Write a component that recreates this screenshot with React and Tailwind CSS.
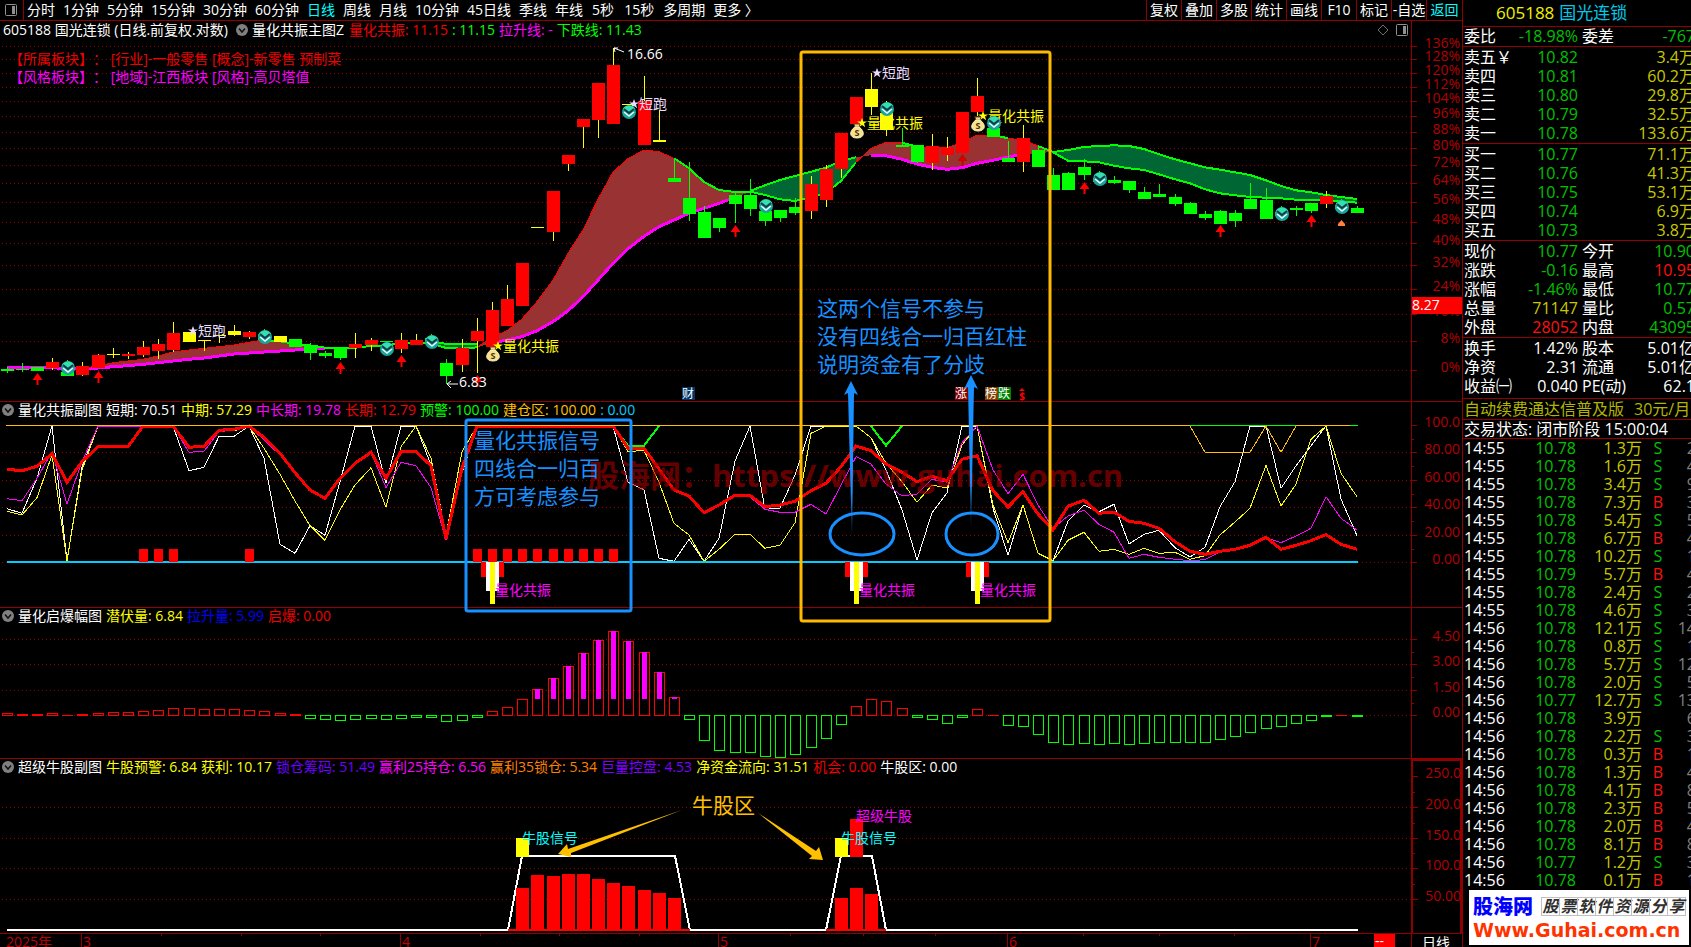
import { Fragment } from 'react';

const FONT = "font-['Open_Sans','Noto_Sans_CJK_SC',sans-serif]";

const PERIODS = ['分时', '1分钟', '5分钟', '15分钟', '30分钟', '60分钟', '日线', '周线', '月线', '10分钟', '45日线', '季线', '年线', '5秒', '15秒', '多周期', '更多 〉'];
const TOOLS = ['复权', '叠加', '多股', '统计', '画线', 'F10', '标记', '-自选'];

// bar i -> x, and sample (third of a pixel) -> y
const X   = i => Math.round(6.5 + 15.17 * i);
const T   = v => v / 3;
const SUB = v => 395 + v / 3;
const LOW = v => 610 + v / 3;

const COLORS = { r: '#ff0000', g: '#00ff00', y: '#ffff00' };

// colour, body top, body bottom, high, low
const CANDLES = [
  ['g', 369, 371, 367, 373], ['g', 369, 370, 363, 372], ['g', 367, 371, 367, 371], ['r', 362, 368, 358, 370], ['g', 372, 376, 360, 376],
  ['r', 366, 375, 362, 376], ['r', 355, 368, 354, 368], ['y', 354, 355, 348, 358], ['r', 354, 356, 352, 359], ['r', 347, 355, 341, 357],
  ['r', 344, 351, 339, 359], ['r', 333, 350, 322, 352], ['y', 332, 342, 332, 342], ['y', 340, 341, 340, 351], ['y', 335, 336, 335, 343],
  ['y', 331, 335, 325, 336], ['r', 332, 337, 331, 339], ['g', 334, 340, 329, 343], ['y', 336, 342, 336, 342], ['g', 339, 347, 339, 347],
  ['g', 345, 353, 343, 360], ['g', 353, 356, 351, 358], ['g', 347, 358, 347, 360], ['r', 344, 348, 333, 358], ['r', 340, 345, 338, 351],
  ['g', 341, 342, 341, 352], ['r', 340, 349, 333, 353], ['r', 340, 345, 334, 345], ['g', 338, 344, 334, 346], ['g', 363, 376, 359, 384],
  ['r', 348, 365, 339, 372], ['r', 331, 341, 318, 373], ['r', 310, 347, 302, 347], ['r', 299, 326, 285, 326], ['r', 263, 306, 263, 306],
  ['y', 227, 228, 227, 228], ['r', 191, 232, 191, 241], ['r', 155, 164, 155, 171], ['r', 119, 127, 119, 148], ['r', 83, 120, 83, 138],
  ['r', 65, 124, 48, 124], ['y', 104, 105, 104, 105], ['r', 101, 145, 76, 145], ['y', 140, 142, 110, 142], ['g', 178, 182, 160, 182],
  ['g', 198, 214, 162, 221], ['g', 212, 238, 206, 238], ['g', 218, 228, 218, 232], ['g', 195, 204, 192, 223], ['g', 195, 209, 179, 216],
  ['g', 211, 221, 200, 226], ['g', 210, 218, 210, 222], ['g', 207, 213, 198, 215], ['r', 184, 211, 176, 219], ['r', 169, 200, 165, 207],
  ['r', 133, 169, 133, 178], ['r', 97, 124, 97, 124], ['y', 89, 107, 73, 115], ['y', 113, 130, 101, 136], ['g', 145, 147, 128, 147],
  ['g', 145, 162, 145, 163], ['r', 146, 163, 134, 170], ['r', 148, 155, 137, 161], ['r', 112, 153, 112, 153], ['r', 96, 112, 78, 116],
  ['g', 128, 137, 117, 137], ['g', 158, 162, 141, 162], ['r', 138, 162, 125, 172], ['g', 150, 167, 146, 167], ['g', 175, 190, 168, 190],
  ['g', 173, 190, 172, 190], ['g', 167, 175, 159, 180], ['g', 178, 182, 171, 182], ['g', 180, 183, 176, 184], ['g', 181, 190, 181, 193],
  ['g', 192, 199, 187, 199], ['g', 194, 197, 184, 197], ['g', 197, 204, 194, 206], ['g', 203, 214, 202, 214], ['g', 214, 218, 211, 220],
  ['g', 211, 224, 210, 224], ['g', 213, 221, 210, 227], ['g', 199, 209, 183, 209], ['g', 200, 219, 188, 219], ['g', 212, 216, 206, 218],
  ['g', 208, 210, 206, 216], ['g', 203, 211, 203, 213], ['r', 196, 204, 191, 208], ['g', 205, 209, 199, 212], ['g', 208, 213, 206, 213],
];

const BANDS = [
  { start: 5, fill: '#993333',
    top: [1105, 1098, 1088, 1083, 1078, 1068, 1056, 1050, 1045, 1040, 1035, 1027, 1020, 1023, 1032, 1040, 1045],
    low: [1107, 1104, 1100, 1097, 1093, 1088, 1083, 1078, 1074, 1068, 1062, 1059, 1056, 1053, 1050, 1047, 1044] },
  { start: 28, fill: '#006633', top: [1026, 1031, 1033, 1031], low: [1030, 1044, 1046, 1042] },
  { start: 31, fill: '#993333',
    top: [1042, 1012, 992, 957, 905, 840, 760, 690, 598, 516, 476, 450, 455, 475, 505, 546, 570, 576, 575],
    low: [1042, 1029, 1020, 1010, 992, 965, 932, 890, 840, 790, 746, 709, 680, 660, 640, 625, 610, 592, 577] },
  { start: 49, fill: '#006633',
    top: [573, 556, 540, 528, 515, 503, 483, 472],
    low: [575, 585, 598, 603, 592, 578, 543, 487] },
  { start: 56, fill: '#993333',
    top: [487, 445, 427, 428, 440, 443, 443, 428, 405, 405, 415, 420, 438, 456],
    low: [472, 466, 467, 478, 492, 502, 508, 503, 490, 481, 471, 463, 459, 456] },
  { start: 69, fill: '#006633',
    top: [456, 450, 441, 438, 436, 438, 447, 463, 478, 490, 502, 509, 517, 525, 541, 558, 571, 577, 585, 591, 597],
    low: [457, 482, 484, 487, 497, 505, 510, 523, 538, 550, 568, 580, 586, 591, 593, 595, 599, 600, 600, 604, 608] },
];

const TRENDS = [
  { start: 0, color: '#ff00ff', w: 3, v: [1103, 1103, 1103, 1103, 1106, ...BANDS[0].low] },
  { start: 32, color: '#ff00ff', w: 3, v: BANDS[2].low.slice(1, 18) },
  { start: 57, color: '#ff00ff', w: 3, v: BANDS[4].low.slice(1, 12) },
  { start: 5, color: '#ff0000', w: 1, v: BANDS[0].top.slice(0, 13) },
  { start: 31, color: '#ff0000', w: 1, v: BANDS[2].top.slice(0, 14) },
  { start: 56, color: '#ff0000', w: 1, v: BANDS[4].top },
  { start: 17, color: '#00ff00', w: 2, v: [1020, 1024, 1032, 1036, 1043, 1043, 1043, 1038, 1036, 1030, 1030, 1026, 1031, 1033, 1031] },
  { start: 28, color: '#00ff00', w: 2, v: [1030, 1044, 1046, 1042] },
  { start: 44, color: '#00ff00', w: 2, v: BANDS[2].top.slice(13) },
  { start: 49, color: '#00ff00', w: 2, v: BANDS[3].top },
  { start: 49, color: '#00ff00', w: 2, v: BANDS[3].low },
  { start: 59, color: '#00ff00', w: 2, v: [428, 440] },
  { start: 65, color: '#00ff00', w: 2, v: [405, 415] },
  { start: 68, color: '#00ff00', w: 2, v: [438, 456] },
  { start: 69, color: '#00ff00', w: 2, v: BANDS[5].top },
  { start: 69, color: '#00ff00', w: 2, v: BANDS[5].low },
];

const SHORT = [341, 355, 250, 93, 497, 215, 93, 93, 93, 93, 93, 93, 227, 217, 124, 124, 93, 190, 448, 475, 392, 421, 260, 93, 93, 265, 93, 93, 210, 430,
  235, 93, 93, 93, 93, 93, 93, 93, 93, 93, 93, 262, 284, 490, 499, 433, 499, 430, 198, 93, 343, 340, 240, 93, 93, 93, 93, 128, 225, 345,
  495, 353, 293, 93, 93, 340, 481, 330, 475, 497, 378, 331, 350, 328, 447, 418, 406, 458, 486, 457, 335, 260, 93, 93, 280, 212, 153, 93, 312, 422];
const MID = [349, 360, 308, 180, 497, 225, 93, 93, 93, 93, 93, 93, 157, 155, 105, 108, 93, 160, 238, 318, 392, 436, 345, 270, 218, 337, 155, 93, 190, 420,
  170, 93, 93, 93, 93, 93, 93, 93, 93, 93, 93, 170, 166, 262, 385, 420, 499, 463, 418, 418, 460, 451, 383, 115, 93, 93, 93, 128, 205, 260,
  322, 270, 279, 150, 93, 330, 443, 330, 475, 497, 436, 412, 469, 463, 478, 460, 475, 472, 493, 482, 420, 381, 340, 211, 333, 268, 133, 93, 235, 305];
const MIDLONG = [311, 317, 250, 170, 327, 200, 93, 93, 93, 93, 93, 93, 172, 169, 110, 105, 93, 135, 180, 230, 285, 310, 250, 205, 172, 278, 202, 212, 278, 435,
  210, 93, 93, 93, 93, 93, 93, 93, 93, 93, 93, 160, 160, 220, 285, 303, 353, 330, 301, 306, 343, 352, 352, 328, 357, 270, 185, 207, 267, 303,
  297, 253, 262, 143, 93, 225, 296, 238, 330, 400, 363, 346, 388, 412, 490, 478, 487, 493, 497, 494, 470, 462, 450, 428, 443, 423, 400, 305, 370, 405];
const LONG = [223, 227, 214, 176, 262, 200, 155, 155, 155, 93, 93, 93, 157, 154, 106, 103, 93, 127, 175, 233, 285, 310, 250, 205, 172, 250, 170, 170, 212, 432,
  220, 93, 93, 93, 93, 93, 93, 93, 93, 93, 93, 160, 160, 222, 285, 303, 353, 330, 301, 301, 335, 330, 319, 287, 265, 215, 153, 167, 207, 232,
  260, 244, 257, 193, 182, 287, 336, 290, 357, 405, 334, 316, 355, 351, 379, 385, 400, 440, 469, 478, 469, 463, 451, 427, 463, 451, 437, 419, 448, 463];

const VOLUME = [309, 312, 312, 309, 316, 312, 309, 306, 306, 303, 300, 294, 294, 297, 297, 297, 300, 303, 309, 312, 323, 326, 329, 326, 323, 326, 323, 320, 320, 332,
  329, 320, 303, 291, 267, 237, 205, 168, 129, 90, 63, 93, 126, 186, 261, 326, 389, 419, 425, 425, 437, 440, 431, 410, 383, 341, 289, 268, 273, 294,
  320, 328, 338, 320, 298, 315, 344, 347, 371, 395, 401, 398, 401, 398, 401, 398, 395, 395, 395, 395, 386, 377, 365, 353, 347, 338, 329, 317, 315, 317];

const BALLS  = [[4, 368], [17, 337], [25, 349], [28, 342], [41, 112], [50, 206], [58, 109], [65, 123], [72, 179], [84, 214], [88, 207]];
const ARROWS = [[2, 373], [6, 371], [22, 362], [26, 355], [31, 375], [48, 225], [63, 154], [71, 182], [80, 225], [86, 215]];

const GRID_MAIN = [46, 59, 73, 87, 101, 116, 132, 148, 165, 183, 202, 222, 243, 265, 289, 314, 341, 370];

const path = (start, values, map) => values.map((v, k) => `${X(start + k)},${map(v).toFixed(1)}`).join(' ');

function Plot({ top, height, grid, children }) {
  return (
    <svg className="block w-full" height={height} viewBox={`0 ${top} 1411 ${height}`} preserveAspectRatio="xMinYMin slice" fontSize="14">
      {grid.map(y => <line key={y} x1="2" x2="1411" y1={y + 0.5} y2={y + 0.5} stroke="#900000" strokeDasharray="1 3" />)}
      {children}
    </svg>
  );
}

function Axis({ top, height, labels, minor = [], children }) {
  return (
    <svg className="block" width="50" height={height} viewBox={`0 ${top} 50 ${height}`} fontSize="14" fill="#b40000">
      {labels.map(([y, text]) => (
        <Fragment key={y}>
          <line x1="0" x2="5" y1={y + 0.5} y2={y + 0.5} stroke="#900000" />
          <text x="48" y={y + 2} textAnchor="end">{text}</text>
        </Fragment>
      ))}
      {minor.map(y => <line key={y} x1="0" x2="2" y1={y + 0.5} y2={y + 0.5} stroke="#900000" />)}
      {children}
    </svg>
  );
}

function Toggle() {
  return (
    <button type="button" aria-label="收起" className="mx-[2px] shrink-0">
      <svg width="12" height="12" viewBox="0 0 12 12">
        <circle cx="6" cy="6" r="6" fill="#808080" />
        <path d="M3 4.500L6 8L9 4.500" fill="none" stroke="#101010" strokeWidth="1.500" />
      </svg>
    </button>
  );
}

function Legend({ title, items }) {
  return (
    <header className="flex h-[17px] items-center whitespace-nowrap pb-[2px] text-[14px] leading-[15px] text-white">
      <Toggle />
      <h2 className="ml-[2px]">{title}</h2>
      {items.map(([text, color]) => <span key={text} className={`ml-[4px] ${color}`}>{text}</span>)}
    </header>
  );
}

function Panel({ title, items, top, height, grid, labels, minor, boxed, children }) {
  return (
    <section className="flex border-b border-[#900000]">
      <div className="min-w-0 flex-1">
        <Legend title={title} items={items} />
        <Plot top={top + 17} height={height - 17} grid={grid}>{children}</Plot>
      </div>
      <div className={boxed ? 'w-[51px] shrink-0 border-2 border-b-0 border-[#900000]' : 'w-[51px] shrink-0 border-l border-[#900000]'}>
        <Axis top={boxed ? top + 2 : top} height={boxed ? height - 2 : height} labels={labels} minor={minor} />
      </div>
    </section>
  );
}

function Ball({ x, y }) {
  return (
    <g transform={`translate(${x} ${y})`}>
      <circle r="7" fill="#1aa59c" />
      <path d="M-6 -3A7 7 0 0 1 6 -3L0 2Z" fill="#35e0b0" />
      <path d="M-5 -3L0 1L5 -3" fill="none" stroke="#123c48" strokeWidth="2" />
      <path d="M-5 0L0 4L5 0" fill="none" stroke="#e8ffff" strokeWidth="1.500" />
    </g>
  );
}

function MoneyBag({ x, y }) {
  return (
    <g transform={`translate(${x} ${y})`}>
      <path d="M-3 -8L3 -8L2 -5L-2 -5Z" fill="#f0d890" stroke="#6b4a20" />
      <path d="M-2 -5C-8 -1 -8 6 0 6S8 -1 2 -5Z" fill="#f7e28a" stroke="#fff3c4" />
      <text y="4" textAnchor="middle" fontSize="9" fontWeight="700" fill="#4a2c10">S</text>
    </g>
  );
}

function StarLabel({ x, y, color, children }) {
  return (
    <g fill={color}>
      <path transform={`translate(${x} ${y})`} d="M0 -5L1.300 -1.600L5 -1.600L2 .600L3.200 4.200L0 2L-3.200 4.200L-2 .600L-5 -1.600L-1.300 -1.600Z" />
      <text x={x + 5} y={y + 5}>{children}</text>
    </g>
  );
}

function Badge({ x, color, children }) {
  return (
    <g>
      <rect x={x} y="387" width="13" height="13" fill={color} />
      <text x={x + 6} y="398" textAnchor="middle" fontSize="12" fill="#fff">{children}</text>
    </g>
  );
}

function MainPlot() {
  return (
    <Plot top={41} height={360} grid={GRID_MAIN}>
      <g className="[text-spacing-trim:space-all]">
        <text x="9" y="64" fill="#f00000">【所属板块】： [行业]-一般零售 [概念]-新零售 预制菜</text>
        <text x="9" y="82" fill="#ff00ff">【风格板块】： [地域]-江西板块 [风格]-高贝塔值</text>
      </g>

      <g shapeRendering="crispEdges">
        {BANDS.map(b => (
          <polygon key={b.start} fill={b.fill}
            points={`${path(b.start, b.top, T)} ${path(b.start, b.low, T).split(' ').reverse().join(' ')}`} />
        ))}
        {TRENDS.map((t, k) => <polyline key={k} points={path(t.start, t.v, T)} fill="none" stroke={t.color} strokeWidth={t.w} />)}
        {CANDLES.map(([c, top, low, high, bottom], i) => (
          <g key={i}>
            <rect x={X(i)} y={high} width="1" height={bottom - high} fill={c === 'g' ? COLORS.g : COLORS.y} />
            <rect x={X(i) - 6} y={top} width="13" height={low - top} fill={COLORS[c]} />
          </g>
        ))}
      </g>

      {ARROWS.map(([i, y]) => (
        <path key={i} d={`M${X(i) + 0.5} ${y}l5 7h-4v5h-2v-5h-4z`} fill={i === 63 ? '#d00000' : '#ff0000'} />
      ))}
      <path d="M1341.500 220L1345 224V226H1338V224Z" fill="#ff8040" />

      <StarLabel x={193} y={331} color="#e8dcff">短跑</StarLabel>
      <StarLabel x={634} y={104} color="#e8dcff">短跑</StarLabel>
      <StarLabel x={877} y={73} color="#e8dcff">短跑</StarLabel>
      <StarLabel x={498} y={346} color="#ffff00">量化共振</StarLabel>
      <StarLabel x={862} y={123} color="#ffff00">量化共振</StarLabel>
      <StarLabel x={983} y={116} color="#ffff00">量化共振</StarLabel>
      {BALLS.map(([i, y]) => <Ball key={i} x={X(i) + 1} y={y} />)}
      <MoneyBag x={493} y={355} />
      <MoneyBag x={857} y={132} />
      <MoneyBag x={978} y={125} />

      <g fill="none" stroke="#fff">
        <path d="M614 48L624 52M614 48H618M614 48L615 52" />
        <path d="M447 384H458M447 384L451 381M447 384L451 388" />
      </g>
      <text x="627" y="59" fill="#fff">16.66</text>
      <text x="459" y="387" fill="#fff">6.83</text>

      <Badge x={682} color="#003366">财</Badge>
      <Badge x={955} color="#800000">涨</Badge>
      <Badge x={985} color="#804000">榜</Badge>
      <Badge x={998} color="#008000">跌</Badge>
      <path d="M1022 388L1025 391H1019Z" fill="#ff0000" />
      <text x="1022" y="400" textAnchor="middle" fontSize="10" fontWeight="700" fill="#ff0000">$</text>
    </Plot>
  );
}

function ResonancePlot() {
  const blocks = [9, 10, 11, 16, 31, 32, 33, 34, 35, 36, 37, 38, 39, 40];
  return (
    <g>
      <g fill="none" shapeRendering="crispEdges">
        <polyline points={path(0, SHORT, SUB)} stroke="#ffffff" />
        <polyline points={path(0, MID, SUB)} stroke="#ffff00" />
        <polyline points={path(0, MIDLONG, SUB)} stroke="#ff00ff" />
        <polyline points={path(40, [93, 152, 152, 93], SUB)} stroke="#00ff00" strokeWidth="2" />
        <polyline points={path(57, [93, 152, 93], SUB)} stroke="#00ff00" strokeWidth="2" />
        <polyline points={path(78, [93, 172, 172, 172, 172, 93, 172, 93], SUB)} stroke="#ffc000" />
        <polyline points={path(0, LONG, SUB)} stroke="#ff0000" strokeWidth="3" />
        <path d="M6 425.500H1358" stroke="#ffc000" />
        <path d="M1190 425.500H1296M1350 425.500H1358" stroke="#00ff00" />
      </g>
      <g shapeRendering="crispEdges">
        <rect x="7" y="561" width="1351" height="2" fill="#00ccff" />
        {blocks.map(i => <rect key={i} x={X(i) - 4} y="549" width="9" height="13" fill="#ff0000" />)}
        {[32, 56, 64].map(i => (
          <g key={i}>
            <rect x={X(i) - 11} y="562" width="23" height="15" fill="#ff0000" />
            <rect x={X(i) - 6} y="562" width="13" height="29" fill="#ffffff" />
            <rect x={X(i) - 2} y="562" width="5" height="42" fill="#ffff00" />
          </g>
        ))}
      </g>
      {[32, 56, 64].map(i => <text key={i} x={X(i) + 3} y="595" fill="#ff00ff">量化共振</text>)}
    </g>
  );
}

function BurstPlot() {
  return (
    <g shapeRendering="crispEdges" fill="none">
      {VOLUME.map((v, i) => {
        const y = Math.round(LOW(v));
        return (
          <rect key={i} x={X(i) - 5 + 0.5} y={Math.min(y, 715) + 0.5} width="10" height={Math.max(Math.abs(y - 715), 0.1)}
            stroke={v < 317 ? '#ff0000' : '#00ff00'} />
        );
      })}
      {VOLUME.slice(35, 45).map((v, k) => (
        <rect key={k} x={X(35 + k) - 2} y={Math.round(LOW(v))} width="5" height={Math.round(LOW(267) - LOW(v))} fill="#ff00ff" />
      ))}
    </g>
  );
}

function BullPlot() {
  const bars = [[34, 888], [35, 875], [36, 876], [37, 874], [38, 874], [39, 879], [40, 883], [41, 886], [42, 890], [43, 893], [44, 898], [55, 898], [56, 888], [57, 894]];
  return (
    <g>
      <g shapeRendering="crispEdges">
        <path d="M7 930H508L522 856H675L690 930H826L841 856H872L886 930H1358" fill="none" stroke="#fff" strokeWidth="2" />
        {bars.map(([i, y]) => <rect key={i} x={X(i) - 6} y={y} width="13" height={931 - y} fill="#ff0000" />)}
        <path d="M508 930H690M826 930H886" stroke="#ff0000" strokeWidth="2" />
        <rect x={X(34) - 6} y="838" width="13" height="19" fill="#ffff00" />
        <rect x={X(55) - 6} y="838" width="13" height="19" fill="#ffff00" />
        <rect x={X(56) - 6} y="819" width="13" height="38" fill="#ff0000" />
      </g>
      <text x="522" y="843" fill="#00ffff">牛股信号</text>
      <text x="841" y="843" fill="#00ffff">牛股信号</text>
      <text x="856" y="821" fill="#ff00ff">超级牛股</text>
      <g fill="#ffc000">
        <text x="692" y="813" fontSize="21">牛股区</text>
        <path d="M558 854L567 844L568 849L682 810L571 853L571 857Z" />
        <path d="M823 860L819 847L816 851L758 813L812 856L809 859Z" />
      </g>
    </g>
  );
}

function Notes() {
  return (
    <svg className="pointer-events-none absolute inset-0 h-full w-full overflow-hidden" fill="none">
      <defs>
        <linearGradient id="fade" x1="0" y1="0" x2="0" y2="1">
          <stop offset="0.700" stopColor="#1890ff" />
          <stop offset="1" stopColor="#1890ff" stopOpacity="0.200" />
        </linearGradient>
      </defs>
      <text x="588" y="487" fontSize="31" fontWeight="700" fill="#a00000" fillOpacity="0.650" className="[text-spacing-trim:space-all]">股海网：https://www.guhai.com.cn</text>
      <rect x="466" y="420" width="165" height="191" rx="2" stroke="#1890ff" strokeWidth="3" />
      <rect x="801" y="52" width="249" height="569" rx="2" stroke="#ffb900" strokeWidth="3" />
      <ellipse cx="862" cy="534" rx="32" ry="21" stroke="#1890ff" strokeWidth="3" />
      <ellipse cx="972" cy="534" rx="26" ry="21" stroke="#1890ff" strokeWidth="3" />
      <g fill="url(#fade)">
        <path d="M851 381L858 395L854 393L852 540L848 393L844 395Z" />
        <path d="M971 375L978 389L974 387L971 530L968 387L964 389Z" />
      </g>
      <g fontSize="21" fill="#1890ff">
        <text x="474" y="448">量化共振信号</text>
        <text x="474" y="476">四线合一归百</text>
        <text x="474" y="504">方可考虑参与</text>
        <text x="817" y="316">这两个信号不参与</text>
        <text x="817" y="344">没有四线合一归百红柱</text>
        <text x="817" y="372">说明资金有了分歧</text>
      </g>
    </svg>
  );
}

const WHITE = 'text-white', GREEN = 'text-[#00c000]', RED = 'text-[#ff1010]', OLIVE = 'text-[#c8c800]';

const sell = [['卖五￥', '10.82', '3.4万'], ['卖四', '10.81', '60.2万'], ['卖三', '10.80', '29.8万'], ['卖二', '10.79', '32.5万'], ['卖一', '10.78', '133.6万']];
const buy  = [['买一', '10.77', '71.1万'], ['买二', '10.76', '41.3万'], ['买三', '10.75', '53.1万'], ['买四', '10.74', '6.9万'], ['买五', '10.73', '3.8万']];
const level = ([name, price, qty]) => [name, price, GREEN, '', qty, OLIVE];

const QUOTES = [
  [['委比', '-18.98%', GREEN, '委差', '-767', GREEN]],
  sell.map(level),
  buy.map(level),
  [
    ['现价', '10.77', GREEN, '今开', '10.90', GREEN],
    ['涨跌', '-0.16', GREEN, '最高', '10.95', RED],
    ['涨幅', '-1.46%', GREEN, '最低', '10.77', GREEN],
    ['总量', '71147', OLIVE, '量比', '0.57', GREEN],
    ['外盘', '28052', RED, '内盘', '43095', GREEN],
  ],
  [
    ['换手', '1.42%', WHITE, '股本', '5.01亿', WHITE],
    ['净资', '2.31', WHITE, '流通', '5.01亿', WHITE],
    ['收益㈠', '0.040', WHITE, 'PE(动)', '62.1', WHITE],
  ],
];

const DEALS = [
  ['14:55', '10.78', '1.3万', 'S', 2], ['14:55', '10.78', '1.6万', 'S', 4], ['14:55', '10.78', '3.4万', 'S', 9], ['14:55', '10.78', '7.3万', 'B', 3],
  ['14:55', '10.78', '5.4万', 'S', 5], ['14:55', '10.78', '6.7万', 'B', 4], ['14:55', '10.78', '10.2万', 'S', 1], ['14:55', '10.79', '5.7万', 'B', 4],
  ['14:55', '10.78', '2.4万', 'S', 2], ['14:55', '10.78', '4.6万', 'S', 3], ['14:56', '10.78', '12.1万', 'S', 14], ['14:56', '10.78', '0.8万', 'S', 1],
  ['14:56', '10.78', '5.7万', 'S', 12], ['14:56', '10.78', '2.0万', 'S', 5], ['14:56', '10.77', '12.7万', 'S', 13], ['14:56', '10.78', '3.9万', '', 6],
  ['14:56', '10.78', '2.2万', 'S', 3], ['14:56', '10.78', '0.3万', 'B', 1], ['14:56', '10.78', '1.3万', 'B', 4], ['14:56', '10.78', '4.1万', 'B', 8],
  ['14:56', '10.78', '2.3万', 'B', 5], ['14:56', '10.78', '2.0万', 'B', 4], ['14:56', '10.78', '8.1万', 'B', 8], ['14:56', '10.77', '1.2万', 'S', 3],
  ['14:56', '10.78', '0.1万', 'B', 1],
];

function QuoteBlock({ rows, pad }) {
  return (
    <div className={`border-b border-[#900000] pl-px ${pad}`}>
      <table className="w-[231px] table-fixed whitespace-nowrap text-[16px] leading-[19px]">
        <tbody>
          {rows.map(([a, av, ac, b, bv, bc]) => (
            <tr key={a} className="h-[19px]">
              <td className="w-[48px] text-white">{a}</td>
              <td className={`w-[66px] text-right ${ac}`}>{av}</td>
              <td className="w-[54px] pl-1 text-white">{b}</td>
              <td className={`w-[63px] text-right ${bc}`}><span className="float-right">{bv}</span></td>
            </tr>
          ))}
        </tbody>
      </table>
    </div>
  );
}

function Sidebar() {
  return (
    <aside className="relative w-[229px] shrink-0 overflow-hidden border-l border-[#900000]">
      <h1 className="flex h-[27px] items-center gap-[5px] border-b border-[#900000] pl-[33px] text-[17px] leading-[26px] text-[#f0f000]">
        605188 <span className="text-[#00c8e6]">国光连锁</span>
      </h1>
      <QuoteBlock rows={QUOTES[0]} pad="" />
      <QuoteBlock rows={QUOTES[1]} pad="pt-px" />
      <QuoteBlock rows={QUOTES[2]} pad="pt-px" />
      <QuoteBlock rows={QUOTES[3]} pad="pt-px" />
      <QuoteBlock rows={QUOTES[4]} pad="pt-px pb-[2px]" />
      <p className="flex h-[21px] items-center gap-[10px] whitespace-nowrap border-b border-[#900000] pl-px text-[16px] leading-[20px] text-[#b4b400]">
        <span>自动续费通达信普及版</span><span>30元/月</span>
      </p>
      <p className="h-[19px] whitespace-nowrap border-b border-[#900000] pl-px text-[16px] leading-[18px] text-white">交易状态: 闭市阶段 15:00:04</p>
      <table className="ml-px w-[232px] table-fixed whitespace-nowrap text-[16px] leading-[18px]">
        <tbody>
          {DEALS.map(([time, price, qty, side, n], k) => (
            <tr key={k} className="h-[18px]">
              <td className="w-[48px] text-white">{time}</td>
              <td className={`w-[64px] text-right ${GREEN}`}>{price}</td>
              <td className={`w-[66px] text-right ${OLIVE}`}>{qty}</td>
              <td className={`w-[32px] text-center ${side === 'B' ? RED : GREEN}`}>{side}</td>
              <td className="w-[22px] text-right text-[#808080]">{n}</td>
            </tr>
          ))}
        </tbody>
      </table>
      <SiteLogo />
    </aside>
  );
}

function SiteLogo() {
  return (
    <a href="#guhai" className="absolute bottom-[2px] right-[2px] flex h-[55px] w-[220px] flex-col justify-center bg-white pl-1">
      <span className="flex items-center gap-2 whitespace-nowrap leading-[24px]">
        <b className="text-[20px] font-black text-[#0000ff]">股海网</b>
        <span className="flex border-r border-[#c0c0c0] text-[16px] font-semibold leading-[17px] text-[#303030]">
          {[...'股票软件资源分享'].map(ch => <i key={ch} className="w-[18px] border border-r-0 border-[#c0c0c0] text-center">{ch}</i>)}
        </span>
      </span>
      <b className="font-['DejaVu_Sans',sans-serif] text-[19px] leading-[22px] text-[#ff3300]">Www.Guhai.com.cn</b>
    </a>
  );
}

function TopBar() {
  return (
    <nav className="flex h-[21px] items-center whitespace-nowrap border-b border-[#900000] text-[14px] leading-[20px] text-white">
      <button type="button" aria-label="侧栏" className="flex h-full w-[24px] shrink-0 items-center border-r border-[#900000] pl-[5px]">
        <PaneIcon />
      </button>
      <div className="flex min-w-0 flex-1 gap-2 overflow-hidden pl-[3px]">
        {PERIODS.map(p => (
          <button key={p} type="button" className={p === '日线' ? 'text-[#00ffff]' : p.endsWith('秒') ? 'px-px' : ''}>{p}</button>
        ))}
      </div>
      {TOOLS.map(t => (
        <button key={t} type="button" className="h-full w-[35px] shrink-0 border-l border-[#900000]">{t}</button>
      ))}
      <button type="button" className="h-full w-[36px] shrink-0 border-l border-[#900000] text-[#00ffff]">返回</button>
    </nav>
  );
}

function PaneIcon() {
  return (
    <svg width="12" height="12" viewBox="0 0 12 12">
      <rect x="0.500" y="0.500" width="11" height="11" rx="1" fill="none" stroke="#909090" />
      <rect x="7" y="2" width="3" height="8" fill="#909090" />
    </svg>
  );
}

function DateAxis() {
  const months = [[81, '3'], [400, '4'], [718, '5'], [1007, '6'], [1310, '7']];
  const minor = [161, 241, 320, 480, 559, 639, 790, 863, 935, 1083, 1159, 1234];
  return (
    <footer className="flex">
      <svg className="block w-full min-w-0 flex-1" height="18" viewBox="0 934 1411 18" preserveAspectRatio="xMinYMin slice" fontSize="14" fill="#c00000">
        <text x="6" y="947">2025年</text>
        {months.map(([x, m]) => (
          <Fragment key={m}>
            <line x1={x + 0.5} x2={x + 0.5} y1="934" y2="952" stroke="#900000" />
            <text x={x + 2} y="947">{m}</text>
          </Fragment>
        ))}
        {minor.map(x => <line key={x} x1={x + 0.5} x2={x + 0.5} y1="934" y2="936" stroke="#900000" />)}
        <rect x="1374" y="934" width="21" height="18" fill="#ff0000" />
        <text x="1375" y="946" fill="#fff">--</text>
      </svg>
      <div className="w-[51px] shrink-0 border-l border-[#900000] pl-[10px] text-[14px] leading-[17px] text-white">日线</div>
    </footer>
  );
}

export default function App() {
  return (
    <div className={`flex h-screen overflow-hidden bg-black ${FONT}`}>
      <main className="relative min-w-0 flex-1">
        <TopBar />

        <section className="flex border-b border-[#900000]">
          <div className="min-w-0 flex-1">
            <header className="flex h-[20px] items-center whitespace-nowrap pb-[2px] pl-[3px] text-[14px] leading-[18px] text-white">
              <span className="mr-[6px]">605188 国光连锁 (日线.前复权.对数)</span>
              <Toggle />
              <h2 className="ml-[2px]">量化共振主图Z</h2>
              <span className="ml-[5px] text-[#f00000]">量化共振: 11.15</span>
              <span className="ml-[4px] text-[#00ff00]">: 11.15</span>
              <span className="ml-[4px] text-[#ff00ff]">拉升线: -</span>
              <span className="ml-[4px] text-[#00ff00]">下跌线: 11.43</span>
              <span className="ml-auto flex items-center gap-[7px] pr-[3px]">
                <svg width="12" height="12" viewBox="0 0 12 12"><path d="M6 1L11 6L6 11L1 6Z" fill="none" stroke="#707070" /></svg>
                <PaneIcon />
              </span>
            </header>
            <MainPlot />
          </div>
          <div className="w-[51px] shrink-0 border-l border-[#900000]">
            <Axis top={21} height={380}
              labels={GRID_MAIN.map((y, k) => [y, `${136 - 8 * k}%`])}>
              <rect x="0" y="297" width="50" height="17" fill="#ff0000" />
              <text x="0" y="310" fill="#fff">8.27</text>
            </Axis>
          </div>
        </section>

        <Panel title="量化共振副图" top={402} height={205} grid={[452, 480, 507, 535, 562]}
          labels={[[425, '100.0'], [452, '80.00'], [480, '60.00'], [507, '40.00'], [535, '20.00'], [562, '0.00']]}
          minor={[439, 466, 494, 521, 549]}
          items={[['短期: 70.51', 'text-white'], ['中期: 57.29', 'text-[#ffff00]'], ['中长期: 19.78', 'text-[#ff00ff]'], ['长期: 12.79', 'text-[#f00000]'],
            ['预警: 100.00', 'text-[#00ff00]'], ['建仓区: 100.00', 'text-[#ffc000]'], [': 0.00', 'text-[#00ccff]']]}>
          <ResonancePlot />
        </Panel>

        <Panel title="量化启爆幅图" top={608} height={150} grid={[639, 664, 690, 715]}
          labels={[[639, '4.50'], [664, '3.00'], [690, '1.50'], [715, '0.00']]} minor={[652, 677, 703]}
          items={[['潜伏量: 6.84', 'text-[#ffff00]'], ['拉升量: 5.99', 'text-[#0000ff]'], ['启爆: 0.00', 'text-[#f00000]']]}>
          <BurstPlot />
        </Panel>

        <Panel boxed title="超级牛股副图" top={759} height={174} grid={[807, 838, 868, 899]}
          labels={[[776, '250.0'], [807, '200.0'], [838, '150.0'], [868, '100.0'], [899, '50.00']]} minor={[792, 823, 853, 884]}
          items={[['牛股预警: 6.84', 'text-[#ffff00]'], ['获利: 10.17', 'text-[#ffff00]'], ['锁仓筹码: 51.49', 'text-[#7000ff]'], ['赢利25持仓: 6.56', 'text-[#ff00ff]'],
            ['赢利35锁仓: 5.34', 'text-[#ff8000]'], ['巨量控盘: 4.53', 'text-[#8000ff]'], ['净资金流向: 31.51', 'text-[#ffff00]'], ['机会: 0.00', 'text-[#f00000]'], ['牛股区: 0.00', 'text-white']]}>
          <BullPlot />
        </Panel>

        <DateAxis />
        <Notes />
      </main>
      <Sidebar />
    </div>
  );
}
